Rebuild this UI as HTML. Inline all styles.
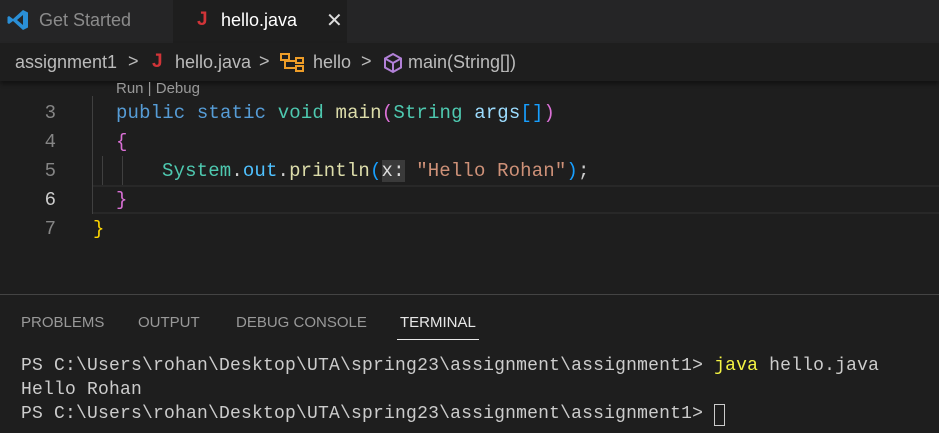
<!DOCTYPE html>
<html><head><style>
*{margin:0;padding:0;box-sizing:border-box}
body{width:939px;height:433px;background:#1e1e1e;overflow:hidden;position:relative;font-family:"Liberation Sans",sans-serif;color:#ccc}
.abs{position:absolute;white-space:pre}
.tabs{position:absolute;left:0;top:0;width:939px;height:43px;background:#252526}
.code{font-family:"Liberation Mono",monospace;font-size:19px;letter-spacing:0.15px}
.term{font-family:"Liberation Mono",monospace;font-size:18px;letter-spacing:0.2px;color:#ccc}
.ln{color:#858585;font-family:"Liberation Mono",monospace;font-size:19px;width:56px;text-align:right}
</style></head><body>
<div class="tabs"></div>
<div class="abs" style="left:173px;top:0;width:174px;height:43px;background:#1e1e1e"></div>
<svg class="abs" style="left:6px;top:8px" width="24" height="24" viewBox="0 0 24 24"><path d="M17 2 L22 4.5 V19.5 L17 22 L7 13 L3 16 L1.5 15 V9 L3 8 L7 11 Z M17 7 L11 12 L17 17 Z" fill="#2a8fd6"/></svg>
<div class="abs" style="left:39px;top:10px;font-size:18px;color:#8b8b8b">Get Started</div>
<div class="abs" style="left:197px;top:9px;font-size:19px;color:#d13438;font-weight:bold">J</div>
<div class="abs" style="left:221px;top:10px;font-size:18px;color:#fff">hello.java</div>
<div class="abs" style="left:326px;top:8px;font-size:20px;color:#ddd">✕</div>
<div class="abs" style="left:0;top:43px;width:939px;height:38px;background:#1e1e1e;box-shadow:0 3px 4px #0006"></div>
<div class="abs" style="left:15px;top:52px;font-size:18px;color:#bbb">assignment1</div>
<div class="abs" style="left:128px;top:51px;font-size:18px;color:#bbb">&gt;</div>
<div class="abs" style="left:152px;top:51px;font-size:19px;color:#d13438;font-weight:bold">J</div>
<div class="abs" style="left:175px;top:52px;font-size:18px;color:#bbb">hello.java</div>
<div class="abs" style="left:259px;top:51px;font-size:18px;color:#bbb">&gt;</div>
<svg class="abs" style="left:279px;top:52px" width="28" height="22" viewBox="0 0 28 22"><g stroke="#ee9d28" stroke-width="2" fill="none"><rect x="2" y="2" width="8" height="6"/><rect x="17" y="6" width="7" height="5"/><rect x="17" y="14" width="7" height="5"/><path d="M6 8 V16 H17 M6 9 H17"/></g></svg>
<div class="abs" style="left:313px;top:52px;font-size:18px;color:#bbb">hello</div>
<div class="abs" style="left:361px;top:51px;font-size:18px;color:#bbb">&gt;</div>
<svg class="abs" style="left:382px;top:52px" width="22" height="22" viewBox="0 0 22 22"><g stroke="#b180d7" stroke-width="2" fill="none"><path d="M11 2 L19 6.5 V15.5 L11 20 L3 15.5 V6.5 Z M3 6.5 L11 11 L19 6.5 M11 11 V20"/></g></svg>
<div class="abs" style="left:408px;top:52px;font-size:18px;color:#bbb">main(String[])</div>

<div class="abs" style="left:116px;top:80px;font-size:15px;color:#999">Run | Debug</div>
<div class="abs" style="left:92px;top:96px;width:1px;height:118px;background:#404040"></div>
<div class="abs" style="left:102px;top:156px;width:1px;height:30px;background:#404040"></div>
<div class="abs" style="left:122px;top:156px;width:1px;height:30px;background:#404040"></div>
<div class="abs" style="left:93px;top:185px;width:846px;height:29px;border-top:2px solid #282828;border-bottom:2px solid #282828"></div>

<div class="abs ln" style="left:0;top:102px">3</div>
<div class="abs ln" style="left:0;top:131px">4</div>
<div class="abs ln" style="left:0;top:160px">5</div>
<div class="abs ln" style="left:0;top:189px;color:#ccc">6</div>
<div class="abs ln" style="left:0;top:218px">7</div>

<div class="abs code" style="left:116px;top:102px"><span style="color:#569cd6">public static</span> <span style="color:#4ec9b0">void</span> <span style="color:#dcdcaa">main</span><span style="color:#da70d6">(</span><span style="color:#4ec9b0">String</span> <span style="color:#9cdcfe">args</span><span style="color:#179fff">[]</span><span style="color:#da70d6">)</span></div>
<div class="abs code" style="left:116px;top:131px;color:#da70d6">{</div>
<div class="abs code" style="left:162px;top:160px"><span style="color:#4ec9b0">System</span><span style="color:#ccc">.</span><span style="color:#4fc1ff">out</span><span style="color:#ccc">.</span><span style="color:#dcdcaa">println</span><span style="color:#179fff">(</span><span style="background:#3a3a3a;color:#ddd">x:</span> <span style="color:#ce9178">"Hello Rohan"</span><span style="color:#179fff">)</span><span style="color:#ccc">;</span></div>
<div class="abs code" style="left:116px;top:189px;color:#da70d6">}</div>
<div class="abs code" style="left:93px;top:218px;color:#ffd700">}</div>

<div class="abs" style="left:0;top:294px;width:939px;height:1px;background:#444"></div>
<div class="abs" style="left:21px;top:314px;font-size:15px;color:#999">PROBLEMS</div>
<div class="abs" style="left:138px;top:314px;font-size:15px;color:#999">OUTPUT</div>
<div class="abs" style="left:236px;top:314px;font-size:15px;color:#999">DEBUG CONSOLE</div>
<div class="abs" style="left:400px;top:314px;font-size:15px;color:#e7e7e7">TERMINAL</div>
<div class="abs" style="left:397px;top:339px;width:82px;height:1px;background:#e7e7e7"></div>

<div class="abs term" style="left:21px;top:356px">PS C:\Users\rohan\Desktop\UTA\spring23\assignment\assignment1&gt; <span style="color:#f5f543">java</span> hello.java</div>
<div class="abs term" style="left:21px;top:380px">Hello Rohan</div>
<div class="abs term" style="left:21px;top:404px">PS C:\Users\rohan\Desktop\UTA\spring23\assignment\assignment1&gt; </div>
<div class="abs" style="left:714px;top:404px;width:11px;height:22px;border:1px solid #ccc"></div>
</body></html>
